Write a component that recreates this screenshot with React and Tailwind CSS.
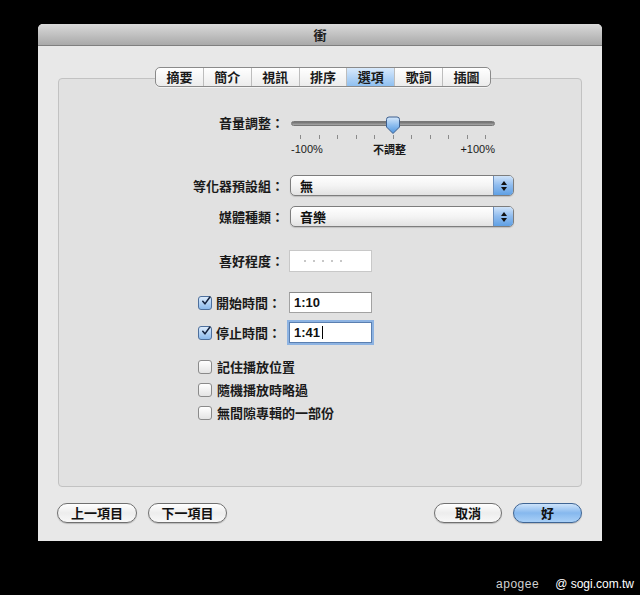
const cjk = { fontFamily: '"Noto Sans CJK TC", "Noto Sans CJK SC", sans-serif' };
const latin = { fontFamily: '"Liberation Sans", Arial, sans-serif' };

const tabs = ['摘要', '簡介', '視訊', '排序', '選項', '歌詞', '插圖'];

function Tabs() {
  return (
    <div className="flex ml-[97px] h-[20px] w-[336px] rounded-[5px] border border-[#8a8a8a] overflow-hidden bg-gradient-to-b from-white to-[#ececec] shadow-[0_1px_0_rgba(255,255,255,0.6)] relative z-10">
      {tabs.map((t, i) => (
        <div
          key={t}
          className={`flex-1 flex items-center justify-center text-[13px] font-semibold text-[#1a1a1a] ${i > 0 ? 'border-l border-[#bdbdbd]' : ''} ${
            t === '選項' ? 'bg-gradient-to-b from-[#d9eafc] via-[#b4d4f6] to-[#8fc0f0]' : ''
          }`}
          style={cjk}
        >
          {t}
        </div>
      ))}
    </div>
  );
}

function Thumb() {
  return (
    <svg width="16" height="19" viewBox="0 0 16 19" className="absolute left-[94px] top-[3px]">
      <defs>
        <linearGradient id="tg" x1="0" y1="0" x2="0" y2="1">
          <stop offset="0" stopColor="#d6e8fb" />
          <stop offset="0.5" stopColor="#8dbdef" />
          <stop offset="1" stopColor="#4f95de" />
        </linearGradient>
      </defs>
      <path d="M1.5 3.5 Q1.5 1 4 1 H12 Q14.5 1 14.5 3.5 V11 L8 17.5 L1.5 11 Z" fill="url(#tg)" stroke="#3d5f8e" strokeWidth="1" />
    </svg>
  );
}

function Slider() {
  const ticks = Array.from({ length: 11 }, (_, i) => i);
  return (
    <div className="w-[204px]">
      <div className="relative h-[20px] flex items-center">
        <div className="w-full h-[5px] rounded-full bg-gradient-to-b from-[#6f6f6f] to-[#a8a8a8] border border-[#777]" />
        <Thumb />
      </div>
      <div className="flex justify-between px-[9px] mt-[2px] h-[4px]">
        {ticks.map(t => (
          <div key={t} className="w-px h-[4px] bg-[#8a8a8a]" />
        ))}
      </div>
      <div className="relative h-[12px] mt-[4px] text-[11px] leading-[12px] text-[#1a1a1a]">
        <span className="absolute left-0" style={latin}>-100%</span>
        <span className="absolute left-[82px] font-semibold" style={cjk}>不調整</span>
        <span className="absolute right-0" style={latin}>+100%</span>
      </div>
    </div>
  );
}

function Popup({ value }) {
  return (
    <div className="flex w-[224px] h-[21px] rounded-[5px] border border-[#7d7d7d] overflow-hidden bg-gradient-to-b from-white via-[#f4f4f4] to-[#e2e2e2] shadow-[0_1px_1px_rgba(0,0,0,0.15)]">
      <div className="flex-1 flex items-center pl-[9px] text-[13px] font-semibold text-[#111]" style={cjk}>
        {value}
      </div>
      <div className="w-[20px] border-l border-[#6b8fbd] bg-gradient-to-b from-[#cfe3f9] via-[#8ebbee] to-[#5fa0e4] flex flex-col items-center justify-center gap-[2px]">
        <div className="w-0 h-0 border-l-[3px] border-r-[3px] border-b-[4px] border-l-transparent border-r-transparent border-b-[#111]" />
        <div className="w-0 h-0 border-l-[3px] border-r-[3px] border-t-[4px] border-l-transparent border-r-transparent border-t-[#111]" />
      </div>
    </div>
  );
}

function Field({ value, focused }) {
  return (
    <div
      className={`w-[83px] h-[21px] bg-white flex items-center pl-[4px] text-[13px] font-semibold text-[#111] ${
        focused
          ? 'border border-[#5a7fb0] shadow-[0_0_0_2px_#8db3e2]'
          : 'border border-[#a2a2a2] border-t-[#8a8a8a]'
      }`}
      style={latin}
    >
      {value}
      {focused && <span className="w-px h-[13px] bg-black ml-[2px]" />}
    </div>
  );
}

function Checkbox({ checked }) {
  return (
    <div
      className={`w-[14px] h-[14px] rounded-[3px] border flex items-center justify-center ${
        checked
          ? 'border-[#4d6f9c] bg-gradient-to-b from-[#dcebfb] to-[#8ab9ec]'
          : 'border-[#8a8a8a] bg-gradient-to-b from-white to-[#e4e4e4]'
      }`}
    >
      {checked && (
        <svg width="14" height="14" viewBox="0 0 14 14" className="-mt-[3px] ml-[2px]">
          <path d="M2.5 7.5 L5.5 11 L12.5 1.5" fill="none" stroke="#14233f" strokeWidth="2.2" strokeLinecap="round" strokeLinejoin="round" />
        </svg>
      )}
    </div>
  );
}

function Label({ children }) {
  return (
    <div className="w-[226px] text-right text-[13px] font-semibold text-[#1a1a1a] pr-[1px]" style={cjk}>
      {children}
    </div>
  );
}

function PillButton({ children, primary, width }) {
  return (
    <div
      className={`${width} h-[20px] rounded-full border flex items-center justify-center text-[13px] font-semibold text-[#111] shadow-[0_1px_1px_rgba(0,0,0,0.2)] ${
        primary
          ? 'border-[#3f6594] bg-gradient-to-b from-[#cde3fa] via-[#86b8ee] to-[#a9d0f7]'
          : 'border-[#707070] bg-gradient-to-b from-white via-[#ededed] to-[#f8f8f8]'
      }`}
      style={cjk}
    >
      {children}
    </div>
  );
}

export default function App() {
  return (
    <div className="w-[640px] h-[595px] bg-black overflow-hidden pt-[24px]">
      {/* Window */}
      <div className="ml-[38px] w-[564px] h-[517px] bg-[#e8e8e8] rounded-t-[5px] flex flex-col">
        {/* Title bar */}
        <div className="h-[22px] rounded-t-[5px] bg-gradient-to-b from-[#dadada] to-[#a9a9a9] border-b border-[#7f7f7f] flex items-center justify-center">
          <span className="text-[13px] font-semibold text-[#222]" style={cjk}>衝</span>
        </div>

        <div className="flex-1 px-[20px] pt-[21px] flex flex-col">
          <Tabs />

          {/* Group box */}
          <div className="-mt-[9px] h-[409px] rounded-[4px] border border-[#c2c2c2] bg-[#e1e1e1] flex flex-col pt-[34px]">
            <div className="flex items-start">
              <div className="h-[20px] flex items-center">
                <Label>音量調整：</Label>
              </div>
              <div className="ml-[6px]">
                <Slider />
              </div>
            </div>

            <div className="flex items-center mt-[20px]">
              <Label>等化器預設組：</Label>
              <div className="ml-[5px]"><Popup value="無" /></div>
            </div>

            <div className="flex items-center mt-[10px]">
              <Label>媒體種類：</Label>
              <div className="ml-[5px]"><Popup value="音樂" /></div>
            </div>

            <div className="flex items-center mt-[23px]">
              <Label>喜好程度：</Label>
              <div className="ml-[4px] w-[83px] h-[22px] bg-white border border-[#c8c8c8] flex items-center gap-[7px] pl-[14px]">
                {[0, 1, 2, 3, 4].map(i => (
                  <div key={i} className="w-[2px] h-[2px] rounded-full bg-[#b4b4b4]" />
                ))}
              </div>
            </div>

            <div className="flex items-center mt-[20px]">
              <div className="w-[226px] flex items-center pl-[139px]">
                <Checkbox checked />
                <span className="ml-[4px] text-[13px] font-semibold text-[#1a1a1a]" style={cjk}>開始時間：</span>
              </div>
              <div className="ml-[4px]"><Field value="1:10" /></div>
            </div>

            <div className="flex items-center mt-[9px]">
              <div className="w-[226px] flex items-center pl-[139px]">
                <Checkbox checked />
                <span className="ml-[4px] text-[13px] font-semibold text-[#1a1a1a]" style={cjk}>停止時間：</span>
              </div>
              <div className="ml-[4px]"><Field value="1:41" focused /></div>
            </div>

            {['記住播放位置', '隨機播放時略過', '無間隙專輯的一部份'].map((t, i) => (
              <div key={t} className={`flex items-center h-[16px] pl-[139px] ${i === 0 ? 'mt-[16px]' : 'mt-[7px]'}`}>
                <Checkbox />
                <span className="ml-[5px] text-[13px] font-semibold text-[#1a1a1a]" style={cjk}>{t}</span>
              </div>
            ))}
          </div>

          {/* Bottom buttons */}
          <div className="flex items-center mt-[16px] -ml-[1px]">
            <PillButton width="w-[80px]">上一項目</PillButton>
            <div className="ml-[11px]"><PillButton width="w-[79px]">下一項目</PillButton></div>
            <div className="flex-1" />
            <PillButton width="w-[68px]">取消</PillButton>
            <div className="ml-[11px]"><PillButton width="w-[69px]" primary>好</PillButton></div>
          </div>
        </div>
      </div>

      {/* Watermark */}
      <div className="flex justify-end items-center pr-[6px] mt-[36px] h-[14px]" style={latin}>
        <span className="text-[12px] text-[#d0d0d0] tracking-[0.5px]">apogee</span>
        <span className="ml-[16px] text-[12px] text-white">@ sogi.com.tw</span>
      </div>
    </div>
  );
}
